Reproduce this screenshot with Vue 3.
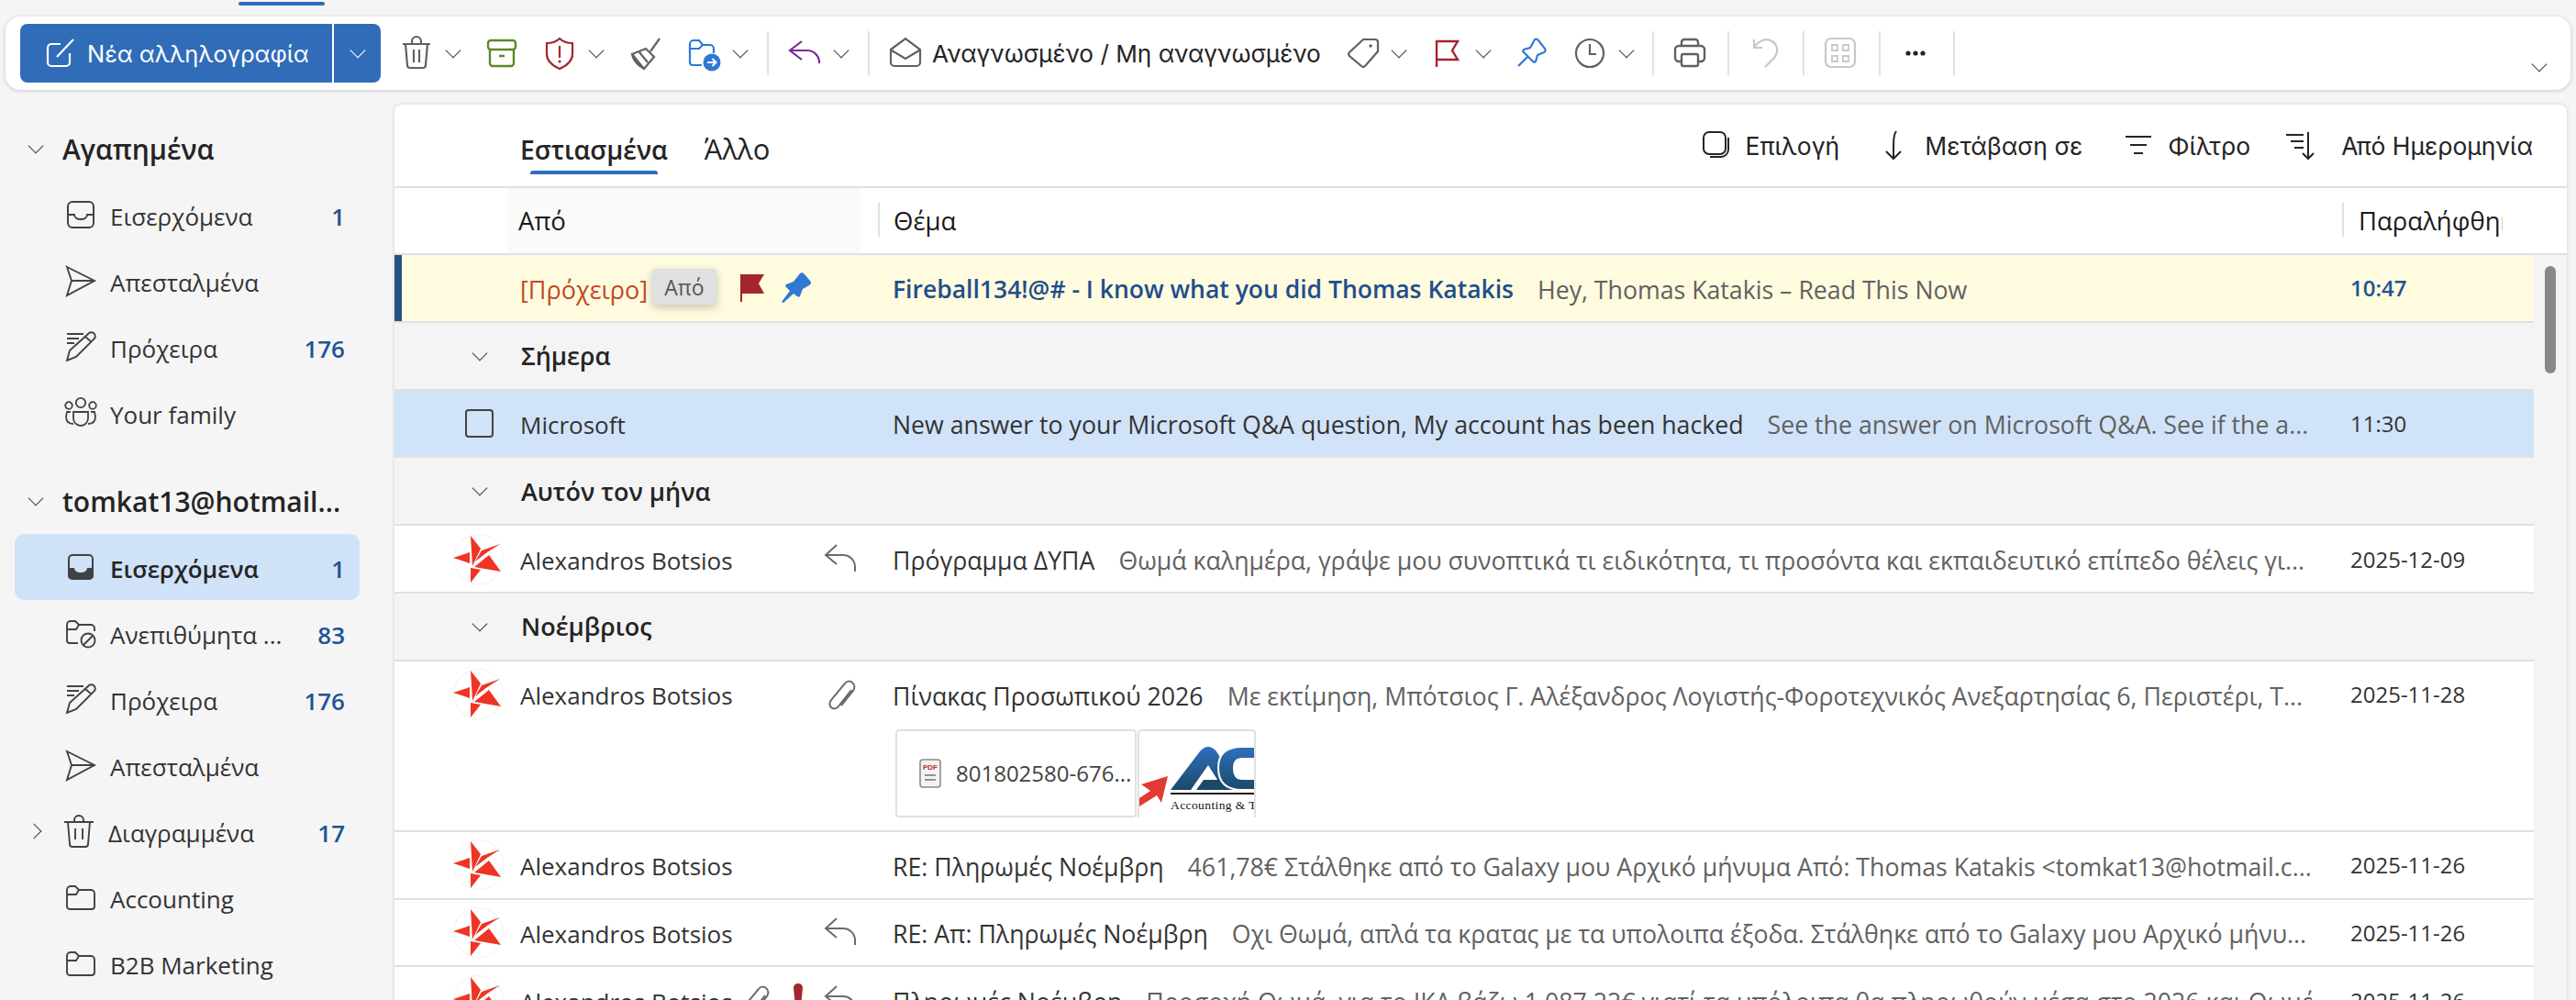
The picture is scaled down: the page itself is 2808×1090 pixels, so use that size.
<script setup>
const tools = [
  { icon: 'trash', ml: 15, chev: true, color: '#616161' },
  { icon: 'archive', ml: 13, color: '#5b8a24' },
  { icon: 'shield', ml: 15, chev: true, color: '#a4262c' },
  { icon: 'broom', ml: 12, color: '#616161' },
  { icon: 'movefolder', ml: 17, chev: true, color: '#2f78d4' },
  { sep: true, ml: 13 },
  { icon: 'reply', ml: 15, chev: true, color: '#7a2a9c' },
  { sep: true, ml: 13 },
  { icon: 'envelope', ml: 15, color: '#616161', label: 'Αναγνωσμένο / Μη αναγνωσμένο' },
  { icon: 'tag', ml: 22, chev: true, color: '#616161' },
  { icon: 'flag', ml: 12, chev: true, color: '#a4262c' },
  { icon: 'pin', ml: 13, color: '#2f78d4' },
  { icon: 'clock', ml: 15, chev: true, color: '#616161' },
  { sep: true, ml: 12 },
  { icon: 'printer', ml: 15, color: '#616161' },
  { sep: true, ml: 17 },
  { icon: 'undo', ml: 16, color: '#c8c8c8' },
  { sep: true, ml: 16 },
  { icon: 'apps', ml: 15, color: '#c8c8c8' },
  { sep: true, ml: 18 },
  { icon: 'dots', ml: 14, color: '#242424' },
  { sep: true, ml: 17 }
]

const favourites = [
  { icon: 'inbox', label: 'Εισερχόμενα', count: 1 },
  { icon: 'send', label: 'Απεσταλμένα' },
  { icon: 'draft', label: 'Πρόχειρα', count: 176 },
  { icon: 'family', label: 'Your family' }
]

const folders = [
  { icon: 'inboxfill', label: 'Εισερχόμενα', count: 1, active: true },
  { icon: 'junk', label: 'Ανεπιθύμητα ...', count: 83 },
  { icon: 'draft', label: 'Πρόχειρα', count: 176 },
  { icon: 'send', label: 'Απεσταλμένα' },
  { icon: 'bin', label: 'Διαγραμμένα', count: 17, expand: true },
  { icon: 'folder', label: 'Accounting' },
  { icon: 'folder', label: 'B2B Marketing' }
]

const actions = [
  { icon: 'select', label: 'Επιλογή', ml: 0, gap: 16 },
  { icon: 'jump', label: 'Μετάβαση σε', ml: 41, gap: 16 },
  { icon: 'filter', label: 'Φίλτρο', ml: 43, gap: 14 },
  { icon: 'sort', label: 'Από Ημερομηνία', ml: 36, gap: 27 }
]

const rows = [
  {
    kind: 'pinned',
    draft: '[Πρόχειρο]',
    marks: ['flagfill', 'pinfill', ''],
    subject: 'Fireball134!@# - I know what you did Thomas Katakis',
    preview: 'Hey, Thomas Katakis – Read This Now',
    date: '10:47'
  },
  { kind: 'group', label: 'Σήμερα' },
  {
    kind: 'selected',
    sender: 'Microsoft',
    subject: 'New answer to your Microsoft Q&A question, My account has been hacked',
    preview: 'See the answer on Microsoft Q&A. See if the a...',
    date: '11:30'
  },
  { kind: 'group', label: 'Αυτόν τον μήνα' },
  {
    sender: 'Alexandros Botsios',
    avatar: true,
    marks: ['replied'],
    subject: 'Πρόγραμμα ΔΥΠΑ',
    preview: 'Θωμά καλημέρα, γράψε μου συνοπτικά τι ειδικότητα, τι προσόντα και εκπαιδευτικό επίπεδο θέλεις γι...',
    date: '2025-12-09'
  },
  { kind: 'group', label: 'Νοέμβριος' },
  {
    kind: 'tall',
    sender: 'Alexandros Botsios',
    avatar: true,
    marks: ['clip'],
    subject: 'Πίνακας Προσωπικού 2026',
    preview: 'Με εκτίμηση, Μπότσιος Γ. Αλέξανδρος Λογιστής-Φοροτεχνικός Ανεξαρτησίας 6, Περιστέρι, Τ...',
    date: '2025-11-28'
  },
  {
    sender: 'Alexandros Botsios',
    avatar: true,
    subject: 'RE: Πληρωμές Νοέμβρη',
    preview: '461,78€ Στάλθηκε από το Galaxy μου Αρχικό μήνυμα Από: Thomas Katakis <tomkat13@hotmail.c...',
    date: '2025-11-26'
  },
  {
    sender: 'Alexandros Botsios',
    avatar: true,
    marks: ['replied'],
    subject: 'RE: Απ: Πληρωμές Νοέμβρη',
    preview: 'Οχι Θωμά, απλά τα κρατας με τα υπολοιπα έξοδα. Στάλθηκε από το Galaxy μου Αρχικό μήνυ...',
    date: '2025-11-26'
  },
  {
    kind: 'narrow',
    sender: 'Alexandros Botsios',
    avatar: true,
    marks: ['clip', 'bang', 'replied'],
    subject: 'Πληρωμές Νοέμβρη',
    preview: 'Προσοχή Θωμά, για το ΙΚΑ βάζω 1.087,22€ γιατί τα υπόλοιπα θα πληρωθούν μέσα στο 2026 και Θωμά...',
    date: '2025-11-26'
  }
]
</script>

<template>
  <div class="page">
    <svg class="defs" aria-hidden="true">
      <symbol id="i-trash" viewBox="0 0 48 48"><path d="M9 14h30M12 14l2 23a3 3 0 0 0 3 3h14a3 3 0 0 0 3-3l2-23M19 14v-3a5 5 0 0 1 10 0v3M21 20v14M27 20v14" fill="none" stroke="currentColor" stroke-width="2.2"/></symbol>
      <symbol id="i-archive" viewBox="0 0 48 48"><path d="M12 10h24a3 3 0 0 1 3 3v4a3 3 0 0 1-3 3H12a3 3 0 0 1-3-3v-4a3 3 0 0 1 3-3zM11 20v15a3 3 0 0 0 3 3h20a3 3 0 0 0 3-3V20M21 27h6" fill="none" stroke="currentColor" stroke-width="2.4"/></symbol>
      <symbol id="i-shield" viewBox="0 0 48 48"><path d="M24 8c4 4 9 5 14 5v12c0 7-5 12-14 16-9-4-14-9-14-16V13c5 0 10-1 14-5zM24 16v13" fill="none" stroke="currentColor" stroke-width="2.2"/><circle cx="24" cy="33" r="1.6" fill="currentColor"/></symbol>
      <symbol id="i-broom" viewBox="0 0 48 48"><path d="M41 8 31 22M11 25l15-6 9 9-11 13zM11 25c1 6 6 12 13 16M19 23l9 11" fill="none" stroke="currentColor" stroke-width="2.2"/></symbol>
      <symbol id="i-movefolder" viewBox="0 0 48 48"><path d="M9 34V14a4 4 0 0 1 4-4h6l4 5h8a4 4 0 0 1 4 4v5M9 19h10l4-4M9 34a3 3 0 0 0 3 3h10" fill="none" stroke="currentColor" stroke-width="2.2"/><circle cx="33" cy="34" r="9.5" fill="currentColor"/><path d="M28 34h9M33.5 30l4 4-4 4" fill="none" stroke="#fff" stroke-width="2"/></symbol>
      <symbol id="i-reply" viewBox="0 0 48 48"><path d="M21 11 8 21l13 10M8 21h19a13 13 0 0 1 13 14" fill="none" stroke="currentColor" stroke-width="2.2"/></symbol>
      <symbol id="i-envelope" viewBox="0 0 48 48"><path d="M8 20 24 8l16 12v14a4 4 0 0 1-4 4H12a4 4 0 0 1-4-4zM9 21l15 9 15-9" fill="none" stroke="currentColor" stroke-width="2.2"/></symbol>
      <symbol id="i-tag" viewBox="0 0 48 48"><path d="M25 9h13a3 3 0 0 1 3 3v10L27 38a3 3 0 0 1-4 0L10 27a3 3 0 0 1 0-4z" fill="none" stroke="currentColor" stroke-width="2.2"/><circle cx="33" cy="16" r="1.8" fill="currentColor"/></symbol>
      <symbol id="i-flag" viewBox="0 0 48 48"><path d="M13 39V11h23l-6 10 6 10H13" fill="none" stroke="currentColor" stroke-width="2.4"/></symbol>
      <symbol id="i-pin" viewBox="0 0 48 48"><path d="M27 9c2-1 3 0 4 1l7 9c1 2 1 3-1 4l-7 3-2 7c-1 1-2 1-3 0L15 23c-1-1-1-2 0-3l7-2zM19 28 9 38" fill="none" stroke="currentColor" stroke-width="2.2"/></symbol>
      <symbol id="i-clock" viewBox="0 0 48 48"><circle cx="24" cy="24" r="15" fill="none" stroke="currentColor" stroke-width="2.2"/><path d="M24 14v11h7" fill="none" stroke="currentColor" stroke-width="2.2"/></symbol>
      <symbol id="i-printer" viewBox="0 0 48 48"><path d="M15 16v-4a3 3 0 0 1 3-3h12a3 3 0 0 1 3 3v4M15 33h-3a4 4 0 0 1-4-4v-9a4 4 0 0 1 4-4h24a4 4 0 0 1 4 4v9a4 4 0 0 1-4 4h-3" fill="none" stroke="currentColor" stroke-width="2.4"/><rect x="15" y="25" width="18" height="13" rx="2" fill="none" stroke="currentColor" stroke-width="2.4"/></symbol>
      <symbol id="i-undo" viewBox="0 0 48 48"><path d="M11 9v9h9M11 18c5-8 13-11 20-7 7 5 6 13 2 18l-10 10" fill="none" stroke="currentColor" stroke-width="2.2"/></symbol>
      <symbol id="i-apps" viewBox="0 0 48 48"><rect x="8" y="8" width="32" height="31" rx="6" fill="none" stroke="currentColor" stroke-width="2.2"/><path d="M15 15h6v6h-6zM27 15h6v6h-6zM15 27h6v6h-6zM27 27h6v6h-6z" fill="none" stroke="currentColor" stroke-width="1.8"/></symbol>
      <symbol id="i-dots" viewBox="0 0 48 48"><circle cx="16" cy="24" r="2.6" fill="currentColor"/><circle cx="24" cy="24" r="2.6" fill="currentColor"/><circle cx="32" cy="24" r="2.6" fill="currentColor"/></symbol>
      <symbol id="i-compose" viewBox="0 0 48 48"><path d="M24 14H14a4 4 0 0 0-4 4v16a4 4 0 0 0 4 4h16a4 4 0 0 0 4-4V24M20 28 38 9" fill="none" stroke="currentColor" stroke-width="2.2"/></symbol>

      <symbol id="i-inbox" viewBox="0 0 36 36"><rect x="4" y="4" width="28" height="28" rx="5" fill="none" stroke="currentColor" stroke-width="2"/><path d="M4 18h7c0 3 3 5 7 5s7-2 7-5h7" fill="none" stroke="currentColor" stroke-width="2"/></symbol>
      <symbol id="i-inboxfill" viewBox="0 0 36 36"><path d="M4 19h7c0 3 3 5 7 5s7-2 7-5h7v8a5 5 0 0 1-5 5H9a5 5 0 0 1-5-5z" fill="currentColor"/><rect x="5" y="5" width="26" height="26" rx="4" fill="none" stroke="currentColor" stroke-width="2"/></symbol>
      <symbol id="i-send" viewBox="0 0 36 36"><path d="M3 3l30 15L3 34l5-16zM8 18h25" fill="none" stroke="currentColor" stroke-width="1.9"/></symbol>
      <symbol id="i-draft" viewBox="0 0 36 36"><path d="M3 4h18M3 9h13M3 14h8M3 33l3-11L26 4a4 4 0 0 1 7 5L13 29zM23 7l7 6" fill="none" stroke="currentColor" stroke-width="1.9"/></symbol>
      <symbol id="i-family" viewBox="0 0 36 36"><circle cx="18" cy="7" r="5.2" fill="none" stroke="currentColor" stroke-width="1.8"/><circle cx="5" cy="10" r="3.8" fill="none" stroke="currentColor" stroke-width="1.8"/><circle cx="31" cy="10" r="3.8" fill="none" stroke="currentColor" stroke-width="1.8"/><path d="M10 17h16v7a8 8 0 0 1-16 0zM7 17H3l-1 5c0 5 3 8 8 8M29 17h4l1 5c0 5-3 8-8 8" fill="none" stroke="currentColor" stroke-width="1.8"/></symbol>
      <symbol id="i-junk" viewBox="0 0 36 36"><path d="M3 26V9a4 4 0 0 1 4-4h5l4 4h13a4 4 0 0 1 4 4v3M3 14h10l3-5M3 26a3 3 0 0 0 3 3h9" fill="none" stroke="currentColor" stroke-width="1.9"/><circle cx="26" cy="26" r="7.5" fill="none" stroke="currentColor" stroke-width="1.9"/><path d="M21 31l10-10" stroke="currentColor" stroke-width="1.9"/></symbol>
      <symbol id="i-bin" viewBox="0 0 36 36"><path d="M2 8h32M6 8l2 24a3 3 0 0 0 3 3h14a3 3 0 0 0 3-3l2-24M13 8V6a5 5 0 0 1 10 0v2M14 15v12M22 15v12" fill="none" stroke="currentColor" stroke-width="1.9"/></symbol>
      <symbol id="i-folder" viewBox="0 0 36 36"><path d="M3 28V10a4 4 0 0 1 4-4h5l4 4h13a4 4 0 0 1 4 4v14a3 3 0 0 1-3 3H6a3 3 0 0 1-3-3zM3 15h10l3-5" fill="none" stroke="currentColor" stroke-width="1.9"/></symbol>

      <symbol id="i-select" viewBox="0 0 36 36"><rect x="6" y="3" width="24" height="24" rx="6" fill="none" stroke="currentColor" stroke-width="2"/><path d="M33 9v13a8 8 0 0 1-8 8H13" fill="none" stroke="currentColor" stroke-width="2"/></symbol>
      <symbol id="i-jump" viewBox="0 0 36 36"><path d="M21 2c-3 4-3 8-3 30M10 24l8 8 8-8" fill="none" stroke="currentColor" stroke-width="2"/></symbol>
      <symbol id="i-filter" viewBox="0 0 36 36"><path d="M4 8h28M9 17h18M13 26h10" fill="none" stroke="currentColor" stroke-width="2.2"/></symbol>
      <symbol id="i-sort" viewBox="0 0 36 36"><path d="M3 6h19M8 13h14M12 20h10M27 3v29M21 26l6 6 6-6" fill="none" stroke="currentColor" stroke-width="2"/></symbol>

      <symbol id="i-replied" viewBox="0 0 48 48"><path d="M20 9 8 20l12 10M8 20h19a13 13 0 0 1 13 14v4" fill="none" stroke="currentColor" stroke-width="2"/></symbol>
      <symbol id="i-clip" viewBox="0 0 48 48"><path d="M36 19 22 37c-2 3-6 3-8 1s-2-5 0-8l15-18c2-3 6-3 8-1 3 2 3 6 1 9L25 36" fill="none" stroke="currentColor" stroke-width="2"/></symbol>
      <symbol id="i-bang" viewBox="0 0 48 48"><path d="M24 6c3 0 5 2 5 5l-2 20c0 2-1 3-3 3s-3-1-3-3l-2-20c0-3 2-5 5-5z" fill="currentColor"/></symbol>
      <symbol id="i-flagfill" viewBox="0 0 48 48"><path d="M11 9h26l-6 10 6 11H13v9h-2z" fill="currentColor"/></symbol>
      <symbol id="i-pinfill" viewBox="0 0 48 48"><path d="M28 8c2-1 3-1 5 1l6 7c2 2 1 4-1 5l-7 4-3 8c-1 1-2 1-3 0l-4-3-11 10-2-1 9-12-4-4c-1-1-1-2 0-3l8-3z" fill="currentColor"/></symbol>
      <symbol id="i-star" viewBox="0 0 55 55"><circle cx="27.5" cy="27.5" r="27" fill="#fff" stroke="#f0f0f0"/><path d="M0 26l18-6v12zM19 2l11 14-9 19zM51 11 31 18l-7 12 13-10zM52 41 39 23 23 36zM19 53l11-14-11-2z" fill="#ee3524"/></symbol>
    </svg>

    <div class="top-strip"><span class="top-mark"></span></div>

    <div class="toolbar">
      <div class="new-btn">
        <span class="new-main">
          <svg class="ic48"><use href="#i-compose" /></svg>
          <span class="new-label">Νέα αλληλογραφία</span>
        </span>
        <span class="new-split"><span class="chev chev-white"></span></span>
      </div>
      <template v-for="(t, i) in tools" :key="i">
        <span v-if="t.sep" class="sep" :style="{ marginLeft: t.ml + 'px' }"></span>
        <div v-else class="tool" :style="{ marginLeft: t.ml + 'px', color: t.color }">
          <svg class="ic48"><use :href="'#i-' + t.icon" /></svg>
          <span v-if="t.label" class="tool-label">{{ t.label }}</span>
          <span v-if="t.chev" class="chev-box"><span class="chev"></span></span>
        </div>
      </template>
      <span class="chev toolbar-more"></span>
    </div>

    <div class="main">
      <aside class="sidebar">
        <div class="nav-head"><span class="chev chev-nav"></span><span>Αγαπημένα</span></div>
        <div v-for="f in favourites" :key="f.label" class="nav-item">
          <svg class="ic36"><use :href="'#i-' + f.icon" /></svg>
          <span class="nav-label">{{ f.label }}</span>
          <span v-if="f.count" class="nav-count">{{ f.count }}</span>
        </div>
        <div class="nav-head nav-head-second"><span class="chev chev-nav"></span><span>tomkat13@hotmail...</span></div>
        <div
          v-for="f in folders"
          :key="f.label"
          class="nav-item"
          :class="{ active: f.active, bin: f.icon === 'bin' }"
        >
          <span v-if="f.expand" class="chev-right"></span>
          <svg class="ic36"><use :href="'#i-' + f.icon" /></svg>
          <span class="nav-label">{{ f.label }}</span>
          <span v-if="f.count" class="nav-count">{{ f.count }}</span>
        </div>
      </aside>

      <section class="panel">
        <div class="tabs">
          <div class="tab tab-on">Εστιασμένα<span class="tab-line"></span></div>
          <div class="tab tab-other">Άλλο</div>
          <div class="actions">
            <div
              v-for="a in actions"
              :key="a.label"
              class="action"
              :style="{ marginLeft: a.ml + 'px', gap: a.gap + 'px' }"
            >
              <svg class="ic36"><use :href="'#i-' + a.icon" /></svg>
              <span>{{ a.label }}</span>
            </div>
          </div>
        </div>

        <div class="heads">
          <div class="head-from">Από</div>
          <div class="head-subject"><span class="head-rule"></span>Θέμα</div>
          <div class="head-date"><span class="head-rule"></span><span class="head-clip">Παραλήφθηκε</span></div>
        </div>

        <div class="body">
          <div class="list">
            <template v-for="(r, i) in rows" :key="i">
              <div v-if="r.kind === 'group'" class="group">
                <span class="chev chev-group"></span>
                <span>{{ r.label }}</span>
              </div>
              <div v-else class="row" :class="r.kind">
                <div class="cell-pic">
                  <svg v-if="r.avatar" class="avatar"><use href="#i-star" /></svg>
                  <span v-if="r.kind === 'selected'" class="check"></span>
                </div>
                <div class="cell-from">
                  <span class="name" :class="{ draft: r.draft }">{{ r.draft || r.sender }}</span>
                  <span class="marks">
                    <span v-for="(m, k) in r.marks" :key="k" class="mark" :class="m">
                      <svg v-if="m" class="ic48"><use :href="'#i-' + m" /></svg>
                    </span>
                  </span>
                </div>
                <div class="cell-text">
                  <span class="subject">{{ r.subject }}</span>
                  <span class="preview">{{ r.preview }}</span>
                </div>
                <div class="cell-date">{{ r.date }}</div>

                <div v-if="r.kind === 'tall'" class="attachments">
                  <div class="att-card">
                    <span class="pdf">
                      <svg width="24" height="32" viewBox="0 0 24 32">
                        <rect x="1" y="1" width="22" height="30" rx="3" fill="#f3f3f3" stroke="#8a8a8a" stroke-width="1.6" />
                        <text x="12" y="12" text-anchor="middle" class="pdf-text">PDF</text>
                        <path d="M6 18h12M6 23h12" stroke="#707070" stroke-width="1.6" />
                      </svg>
                    </span>
                    <span class="att-name">801802580-676...</span>
                  </div>
                  <div class="att-image">
                    <svg width="127" height="96" viewBox="0 0 127 96">
                      <defs>
                        <linearGradient id="logoblue" x1="0" y1="0" x2="0" y2="1">
                          <stop offset="0" stop-color="#2f6fbd" />
                          <stop offset="1" stop-color="#1b4a68" />
                        </linearGradient>
                      </defs>
                      <polygon points="31,49 2,58 12,65 0,73 0,82 19,70 24,78" fill="#e23b33" />
                      <path d="M34 64 66 22Q75 12 84 22L110 64H92L75 37 56 64z" fill="url(#logoblue)" />
                      <path d="M62 64 70 53H88L95 64z" fill="#1b4a68" />
                      <path d="M127 17H112Q86 17 86 40 86 64 112 64H127V52H112Q103 52 103 40 103 30 112 30H127z" fill="url(#logoblue)" stroke="#fff" stroke-width="2" />
                      <rect x="34" y="67" width="93" height="2" fill="#111" />
                      <text x="34" y="85" class="logo-text">Accounting &amp; T</text>
                    </svg>
                  </div>
                </div>

                <div v-if="r.kind === 'pinned'" class="tip">Από</div>
              </div>
            </template>
          </div>
          <div class="scroll"><span class="thumb"></span></div>
        </div>
      </section>
    </div>
  </div>
</template>

<style>
html, body { background: #f5f5f5; }
</style>

<style scoped>
.page {
  width: 2808px;
  height: 1090px;
  overflow: hidden;
  background: #f5f5f5;
  color: #242424;
  font-family: "Open Sans", "Noto Sans", sans-serif;
  font-size: 26px;
  position: relative;
}
.defs { position: absolute; width: 0; height: 0; }

.ic48 { width: 48px; height: 48px; flex: none; display: block; }
.ic36 { width: 36px; height: 36px; flex: none; display: block; }

.top-strip { height: 18px; position: relative; }
.top-mark {
  position: absolute;
  left: 260px;
  top: 2px;
  width: 94px;
  height: 4px;
  border-radius: 2px;
  background: #2f6cb8;
}

/* toolbar */
.toolbar {
  margin: 0 6px;
  height: 80px;
  padding-left: 16px;
  background: #fff;
  border-radius: 16px;
  box-shadow: 0 1px 5px rgba(0, 0, 0, 0.18);
  display: flex;
  align-items: center;
  position: relative;
  font-family: Inter, "Noto Sans", sans-serif;
}
.new-btn {
  width: 393px;
  height: 64px;
  flex: none;
  display: flex;
  background: #316cb8;
  border-radius: 8px;
  color: #fff;
}
.new-main {
  width: 342px;
  box-sizing: border-box;
  display: flex;
  align-items: center;
  padding-left: 20px;
  border-right: 2px solid #fff;
}
.new-label { font-size: 25.4px; margin-left: 5px; white-space: nowrap; }
.new-split { flex: 1; display: flex; align-items: center; justify-content: center; }

.chev {
  display: inline-block;
  width: 11px;
  height: 11px;
  border-right: 1.6px solid #424242;
  border-bottom: 1.6px solid #424242;
  transform: translateY(-3px) rotate(45deg);
}
.chev-white { border-color: #fff; }
.chev-box { width: 32px; display: flex; align-items: center; justify-content: center; }
.chev-right {
  position: absolute;
  left: 15px;
  width: 11px;
  height: 11px;
  border-top: 1.8px solid #424242;
  border-right: 1.8px solid #424242;
  transform: rotate(45deg);
}

.sep { width: 2px; height: 48px; background: #e2e2e2; flex: none; }
.tool { display: flex; align-items: center; flex: none; }
.tool-label {
  margin-left: 5px;
  width: 423px;
  white-space: nowrap;
  font-size: 26.2px;
  color: #242424;
}
.toolbar-more {
  position: absolute;
  right: 28px;
  top: 46px;
  transform: rotate(45deg);
}

/* layout */
.main { display: flex; margin-top: 16px; }

.sidebar { width: 430px; flex: none; padding-top: 12px; }
.nav-head {
  height: 72px;
  display: flex;
  align-items: center;
  padding-left: 33px;
  font-size: 30px;
  font-weight: 600;
  white-space: nowrap;
}
.nav-head-second { margin-top: 24px; }
.chev-nav { margin-right: 23px; flex: none; }
.nav-item {
  height: 72px;
  margin: 0 38px 0 16px;
  padding: 0 16px 0 54px;
  display: flex;
  align-items: center;
  color: #333;
  border-radius: 10px;
  position: relative;
}
.nav-item .ic36 { color: #424242; }
.nav-label { margin-left: 14px; padding-top: 3px; white-space: nowrap; flex: 1; }
.nav-count { color: #205493; font-weight: 600; padding-top: 3px; }
.nav-item.active { background: #cfe2f8; font-weight: 600; color: #242424; }
.nav-item.bin { padding-left: 52px; }

.panel {
  flex: 1;
  margin-right: 10px;
  background: #fff;
  border-radius: 8px 8px 0 0;
  box-shadow: 0 0 4px rgba(0, 0, 0, 0.16);
  min-width: 0;
}
.tabs {
  height: 91px;
  box-sizing: border-box;
  border-bottom: 2px solid #e0e0e0;
  display: flex;
  align-items: center;
  padding: 9px 37px 0 137px;
  font-size: 28.3px;
}
.tab { position: relative; margin-right: 40px; white-space: nowrap; }
.tab-on { font-weight: 600; }
.tab-other { font-size: 31px; margin-bottom: 3px; }
.tab-line {
  position: absolute;
  left: 11px;
  right: 11px;
  top: 42px;
  height: 4px;
  background: #2f6cb8;
  border-radius: 3px 3px 0 0;
}
.actions {
  margin-left: auto;
  margin-bottom: 8px;
  display: flex;
  align-items: center;
  font-family: Inter, "Noto Sans", sans-serif;
  font-size: 26.5px;
}
.action { display: flex; align-items: center; white-space: nowrap; }

.heads {
  height: 73px;
  box-sizing: border-box;
  border-bottom: 2px solid #e0e0e0;
  display: grid;
  grid-template-columns: 124px 403px 1596px 1fr;
  align-items: stretch;
  color: #1a1a1a;
  font-size: 27.5px;
}
.head-from {
  grid-column: 2;
  margin-right: 19px;
  background: #fafafa;
  display: flex;
  align-items: center;
  padding-left: 11px;
}
.head-subject {
  grid-column: 3;
  display: flex;
  align-items: center;
  padding-left: 17px;
  position: relative;
}
.head-date {
  grid-column: 4;
  display: flex;
  align-items: center;
  padding-left: 18px;
  position: relative;
}
.head-rule {
  position: absolute;
  left: 0;
  top: 16px;
  width: 2px;
  height: 37px;
  background: #e0e0e0;
}
.head-clip { width: 157px; overflow: hidden; white-space: nowrap; }

.body { display: flex; }
.list { width: 2332px; flex: none; background: #fff; }
.scroll { flex: 1; background: #f4f4f4; height: 820px; padding: 12px 0 0 12px; }
.thumb { display: block; width: 12px; height: 117px; border-radius: 6px; background: #888; }

.group {
  height: 73.8px;
  box-sizing: border-box;
  border-bottom: 2px solid #e0e0e0;
  background: #f4f4f4;
  display: flex;
  align-items: center;
  font-weight: 600;
  font-size: 27px;
  padding-left: 87px;
}
.chev-group { margin-right: 39px; flex: none; }

.row {
  height: 73.8px;
  box-sizing: border-box;
  border-bottom: 2px solid #e0e0e0;
  display: grid;
  grid-template-columns: 137px 406px 1589px 1fr;
  grid-template-rows: 71.8px;
  align-items: center;
  position: relative;
}
.row.pinned { background: #fffbdf; box-shadow: inset 8px 0 0 #235287; }
.row.selected { background: #d1e3f8; }
.row.tall { height: 186px; grid-template-rows: 72px 1fr; }

.cell-pic { display: flex; align-items: center; }
.avatar { width: 55px; height: 55px; display: block; margin-left: 64px; }
.check {
  width: 31px;
  height: 31px;
  box-sizing: border-box;
  border: 2px solid #424242;
  border-radius: 4px;
  margin-left: 77px;
  display: block;
}
.cell-from {
  display: flex;
  align-items: center;
  padding-right: 33px;
  min-width: 0;
}
.name { white-space: nowrap; flex: 1; overflow: hidden; color: #333; padding-top: 3px; }
.name.draft { color: #c4481f; font-size: 27px; }
.marks { display: flex; flex: none; }
.mark { width: 48px; height: 48px; display: block; color: #6b6b6b; }
.mark.flagfill { color: #a4262c; }
.mark.pinfill { color: #2f78d4; }
.mark.bang { color: #a4262c; margin-right: -2px; }

.cell-text {
  display: flex;
  align-items: center;
  gap: 26px;
  padding: 3px 42px 0 0;
  min-width: 0;
  white-space: nowrap;
  overflow: hidden;
  font-size: 26.7px;
}
.subject { flex: none; color: #333; }
.preview { color: #616161; overflow: hidden; }
.cell-date { color: #333; font-size: 24px; white-space: nowrap; }
.pinned .subject { color: #1f4e8c; font-weight: 600; font-size: 26.5px; }
.pinned .cell-date { color: #205493; font-weight: 600; }

.tip {
  position: absolute;
  left: 281px;
  top: 15px;
  width: 70px;
  height: 39px;
  background: #e0e0e0;
  border-radius: 3px;
  box-shadow: 0 3px 10px rgba(0, 0, 0, 0.22);
  color: #555;
  font-size: 23px;
  display: flex;
  align-items: center;
  justify-content: center;
}

.attachments {
  grid-column: 3;
  grid-row: 2;
  align-self: start;
  display: flex;
  padding: 2px 0 0 3px;
}
.att-card {
  width: 263px;
  height: 96px;
  box-sizing: border-box;
  border: 2px solid #e0e0e0;
  border-radius: 4px;
  display: flex;
  align-items: center;
  padding-left: 24px;
}
.pdf { display: block; width: 24px; height: 32px; }
.pdf-text { font: 700 8px "Liberation Sans", sans-serif; fill: #c62828; }
.att-name { margin-left: 16px; font-size: 24px; color: #424242; white-space: nowrap; }
.att-image {
  width: 129px;
  height: 96px;
  box-sizing: border-box;
  margin-left: 1px;
  border: 2px solid #e0e0e0;
  border-bottom: none;
  border-radius: 4px 4px 0 0;
  overflow: hidden;
}
.logo-text { font: 13.5px "Liberation Serif", serif; fill: #111; letter-spacing: 0.4px; }
</style>
